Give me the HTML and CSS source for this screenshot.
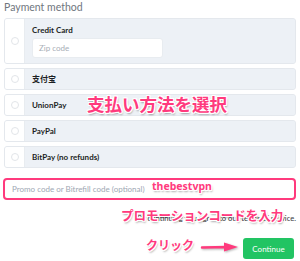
FILE: index.html
```html
<!DOCTYPE html>
<html lang="ja">
<head>
<meta charset="utf-8">
<link rel="stylesheet" href="styles.css">
</head>
<body>
<div class="page">
  <div class="title">Payment method</div>
  <div class="methods">
    <div class="card card-cc">
      <div class="radio-col"><span class="radio"></span></div>
      <div class="body body-cc">
        <div class="label">Credit Card</div>
        <div class="zip">Zip code</div>
      </div>
    </div>
    <div class="card">
      <div class="radio-col"><span class="radio"></span></div>
      <div class="body"><div class="label cjk">支付宝</div></div>
    </div>
    <div class="card">
      <div class="radio-col"><span class="radio"></span></div>
      <div class="body"><div class="label">UnionPay</div></div>
    </div>
    <div class="card">
      <div class="radio-col"><span class="radio"></span></div>
      <div class="body"><div class="label">PayPal</div></div>
    </div>
    <div class="card">
      <div class="radio-col"><span class="radio"></span></div>
      <div class="body"><div class="label">BitPay (no refunds)</div></div>
    </div>
  </div>
  <div class="promo">Promo code or Bitrefill code (optional)</div>
  <div class="terms">By continuing you agree to our terms of service.</div>
  <div class="actions"><button class="continue">Continue</button></div>

  <div class="note note-select">支払い方法を選択</div>
  <div class="note note-code">thebestvpn</div>
  <div class="note note-promo">プロモーションコードを入力</div>
  <div class="note note-click">クリック</div>
  <svg class="arrow" width="40" height="12" viewBox="0 0 40 12">
    <path d="M2 6.5 L27 6 L27 6.8" stroke="#ff3a7d" stroke-width="2.4" fill="none" stroke-linecap="round"/>
    <path d="M24 1.5 L38 6 L24 10.5 Z" fill="#ff3a7d"/>
  </svg>
</div>
</body>
</html>
```
FILE: styles.css
```css
* { box-sizing: border-box; }
html, body { margin: 0; padding: 0; background: #ffffff; }
body { font-family: Lato, "Noto Sans", "Noto Sans CJK SC", sans-serif; }
.page {
  position: relative;
  width: 300px;
  height: 261px;
  padding: 0 4px;
  display: flex;
  flex-direction: column;
  overflow: hidden;
}
.title {
  font-size: 10.5px;
  line-height: 14px;
  color: #6f767e;
  margin-bottom: 4px;
}
.methods { display: flex; flex-direction: column; gap: 4px; }
.card {
  display: flex;
  height: 22px;
  border: 1px solid #e4e8ed;
  border-radius: 3px;
  overflow: hidden;
  background: #edf1f6;
}
.card-cc { height: 46px; }
.radio-col {
  width: 20px;
  background: #ffffff;
  border-right: 1px solid #e8ecf0;
  display: flex;
  align-items: center;
  justify-content: center;
}
.radio {
  width: 8px;
  height: 8px;
  border: 1px solid #e2e5e9;
  border-radius: 50%;
  background: #fff;
}
.body {
  flex: 1;
  background: #edf1f6;
  padding: 0 7px;
  display: flex;
  align-items: center;
}
.body-cc {
  flex-direction: column;
  align-items: flex-start;
  padding-top: 5px;
  gap: 2px;
}
.label {
  font-size: 8px;
  line-height: 12px;
  font-weight: 700;
  color: #1c1f24;
}
.cjk { font-family: "Noto Sans CJK SC", sans-serif; font-weight: 700; }
.zip {
  width: 131px;
  height: 20px;
  background: #ffffff;
  border: 1px solid #e8ecf0;
  border-radius: 3px;
  font-size: 8px;
  line-height: 18px;
  padding-left: 6px;
  color: #a7aeb6;
}
.promo {
  margin: 10px 0 0 -1px;
  height: 22px;
  border: 2px solid #ff3a7d;
  border-radius: 4px;
  font-size: 8px;
  line-height: 18px;
  padding-left: 7px;
  color: #9ea7b3;
}
.terms {
  margin-top: 12px;
  text-align: right;
  font-size: 7.6px;
  line-height: 12px;
  color: #33363a;
}
.actions {
  margin-top: 14px;
  display: flex;
  justify-content: flex-end;
  padding-right: 2px;
}
.continue {
  width: 51px;
  height: 21px;
  border: none;
  border-radius: 3px;
  background: #22c463;
  color: #ffffff;
  font-family: Lato, "Noto Sans", sans-serif;
  font-size: 8px;
  padding: 0;
}
.note {
  position: absolute;
  color: #ff3a7d;
  font-family: "Noto Sans CJK JP", sans-serif;
  font-weight: 700;
  line-height: 1;
  white-space: nowrap;
  text-shadow:
    1px 0 0 #fff, -1px 0 0 #fff, 0 1px 0 #fff, 0 -1px 0 #fff,
    1px 1px 0 #fff, -1px -1px 0 #fff, 1px -1px 0 #fff, -1px 1px 0 #fff,
    1px 2px 2px rgba(0,0,0,0.35);
}
.note-select { left: 87px; top: 95px; font-size: 17.5px; }
.note-code { left: 152px; top: 181px; font-size: 10.5px; font-family: "Noto Sans", sans-serif; }
.note-promo { left: 121px; top: 209px; font-size: 12.6px; letter-spacing: -0.1px; }
.note-click { left: 146px; top: 239px; font-size: 12px; }
.arrow {
  position: absolute;
  left: 200px;
  top: 241px;
  filter: drop-shadow(1px 1px 1px rgba(0,0,0,0.3));
}
```
